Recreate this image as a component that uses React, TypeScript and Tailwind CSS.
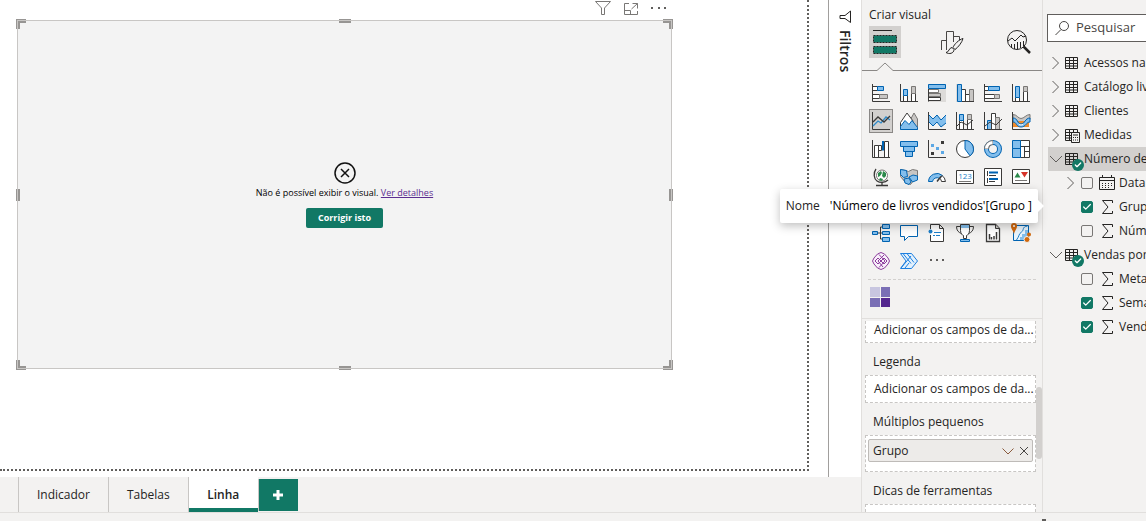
import { useState, type ReactNode } from "react";
import { Check } from "lucide-react";
import clsx from "clsx";

const DARK = "#3b3a39";
const BLUE = "#0063b1";
const SKY = "#83beec";
const GRAY = "#797775";
const SILVER = "#c8c6c4";

const axis = <path d="M.5 0v17.5H18" stroke={DARK} />;

const visuals: { name: string; art: ReactNode }[] = [
  {
    name: "Barras empilhadas",
    art: (
      <>
        <path d="M.5 2.5h5v4h-5M.5 10.5h7v4h-7" fill="#fff" stroke={DARK} />
        <path d="M5.5 2.5h6v4h-6z" fill={SKY} stroke={BLUE} />
        <path d="M7.5 10.5h8v4h-8z" fill={SILVER} stroke={GRAY} />
        {axis}
      </>
    ),
  },
  {
    name: "Colunas empilhadas",
    art: (
      <>
        <path d="M3.5 11.5h4v6h-4zM11.5 9.5h4v8h-4z" fill="#fff" stroke={DARK} />
        <path d="M3.5 5.5h4v6h-4z" fill={SKY} stroke={BLUE} />
        <path d="M11.5 2.5h4v7h-4z" fill={SILVER} stroke={GRAY} />
        {axis}
      </>
    ),
  },
  {
    name: "Barras agrupadas",
    art: (
      <>
        <path d="M0 0h18v18H0z" fill="#dddbd9" />
        <path d="M.5 5.5h10v3H.5z" fill="#fff" stroke={GRAY} />
        <path d="M.5 9.5h12v3H.5z" fill={SILVER} stroke={GRAY} />
        <path d="M.5 13.5h12v3H.5z" fill="#fff" stroke={DARK} />
        <path d="M.5.5h17v4H.5z" fill={SKY} stroke={BLUE} />
        <path d="M.5 5v12.5" stroke={DARK} />
      </>
    ),
  },
  {
    name: "Colunas agrupadas",
    art: (
      <>
        <path d="M0 0h5v18H0z" fill="#dddbd9" />
        <path d="M5.5 5.5h4v12h-4zM9.5 10.5h4v7h-4z" fill="#fff" stroke={DARK} />
        <path d="M13.5 5.5h4v12h-4z" fill={SILVER} stroke={GRAY} />
        <path d="M1.5.5h4v17h-4z" fill={SKY} stroke={BLUE} />
        <path d="M6 17.5h12" stroke={DARK} />
      </>
    ),
  },
  {
    name: "Barras 100% empilhadas",
    art: (
      <>
        <path d="M.5 2.5h4v4h-4M.5 10.5h10v4H.5" fill="#fff" stroke={DARK} />
        <path d="M4.5 2.5h11v4h-11z" fill={SKY} stroke={BLUE} />
        <path d="M10.5 10.5h5v4h-5z" fill={SILVER} stroke={GRAY} />
        {axis}
      </>
    ),
  },
  {
    name: "Colunas 100% empilhadas",
    art: (
      <>
        <path d="M3.5 13.5h4v4h-4zM11.5 7.5h4v10h-4z" fill="#fff" stroke={DARK} />
        <path d="M3.5 2.5h4v11h-4z" fill={SKY} stroke={BLUE} />
        <path d="M11.5 2.5h4v5h-4z" fill={SILVER} stroke={GRAY} />
        {axis}
      </>
    ),
  },
  {
    name: "Linhas",
    art: (
      <>
        {axis}
        <path d="M1 14l5-5 3 2 5-6 4 3" stroke="#2f8bc9" strokeWidth="1.3" />
        <path d="M1 10l5-5 6 5 6-6" stroke={DARK} strokeWidth="1.3" />
      </>
    ),
  },
  {
    name: "Área",
    art: (
      <>
        <path d="M8 12l6-11 3.5 6v10.5H8z" fill={SILVER} stroke={GRAY} />
        <path d="M.5 10.5L7 1l6 8-3 8H.5z" fill="#fff" stroke={DARK} />
        <path d="M.5 17.5v-3L5 8.5l4 4 3-4 5.5 7v2z" fill={SKY} stroke={BLUE} />
      </>
    ),
  },
  {
    name: "Faixas",
    art: (
      <>
        <path d="M1 3l4 4 4-4 4 5 5-5v8l-5 4-4-5-4 4-4-4z" fill={SKY} />
        <path d="M1 3l4 4 4-4 4 5 5-5M1 10l4 4 4-4 4 5 5-4" stroke={BLUE} />
        {axis}
      </>
    ),
  },
  {
    name: "Linha e colunas empilhadas",
    art: (
      <>
        <path d="M3.5 8.5h4v9h-4zM11.5 7.5h4v10h-4z" fill="#fff" stroke={DARK} />
        <path d="M3.5 2.5h4v6h-4z" fill={SKY} stroke={BLUE} />
        <path d="M11.5 2.5h4v5h-4z" fill={SILVER} stroke={GRAY} />
        <path d="M1 14l4-4 6 3 6-5" stroke={DARK} />
        {axis}
      </>
    ),
  },
  {
    name: "Linha e colunas agrupadas",
    art: (
      <>
        <path d="M3.5 8.5h4v9h-4z" fill={SKY} stroke={BLUE} />
        <path d="M7.5 1.5h4v16h-4z" fill="#fff" stroke={DARK} />
        <path d="M11.5 5.5h4v12h-4z" fill={SILVER} stroke={GRAY} />
        <path d="M1 14l5-4 6 3 6-6" stroke={DARK} />
        {axis}
      </>
    ),
  },
  {
    name: "Faixas de opções",
    art: (
      <>
        <path d="M1 2.5c4 0 5 4 8 4s5-4 9-4v5c-4 0-5 3-9 3s-4-3-8-3z" fill={SILVER} stroke={GRAY} />
        <path d="M1 9h16v6H1z" fill="#ee8b2d" />
        <path d="M1 6c5 0 4 6 8 6s4-6 9-6v4c-4 0-4 5-9 5s-4-5-8-5z" fill={SKY} stroke={BLUE} />
        <path d="M7 12.500q2 1 4 0" stroke="#fff" />
        {axis}
      </>
    ),
  },
  {
    name: "Cascata",
    art: (
      <>
        <path d="M2.5 5.5h4v12h-4zM6.500 5.500h3v5h-3zM12.500 1.500h4v16h-4z" fill="#fff" stroke={DARK} />
        <path d="M11 1v9.500" stroke={BLUE} strokeWidth="2" />
        {axis}
      </>
    ),
  },
  {
    name: "Funil",
    art: (
      <path d="M.5 1.5h17v5H.5zM3.5 6.5h11v5h-11zM5.5 11.5h7v5h-7z" fill={SKY} stroke={BLUE} />
    ),
  },
  {
    name: "Dispersão",
    art: (
      <>
        <path d="M13 1h3v3h-3zM3 12h3v3H3z" fill={DARK} />
        <path d="M3 4h3v3H3zM8 7h3v3H8zM13 11h3v3h-3z" fill="#5ca8e5" />
        {axis}
      </>
    ),
  },
  {
    name: "Pizza",
    art: (
      <>
        <circle cx="9" cy="9" r="8.5" fill="#fff" stroke={DARK} />
        <path d="M9 .5a8.500 8.500 0 0 1 5 15.300L9 9z" fill={SKY} stroke={BLUE} />
      </>
    ),
  },
  {
    name: "Rosca",
    art: (
      <>
        <circle cx="9" cy="9" r="6.500" stroke={BLUE} strokeWidth="5" />
        <circle cx="9" cy="9" r="6.500" stroke={SKY} strokeWidth="3" />
        <path d="M2.500 9A6.500 6.500 0 0 1 9 2.500" stroke={GRAY} strokeWidth="5" />
        <path d="M2.500 8.500A6.500 6.500 0 0 1 8.500 2.500" stroke="#fff" strokeWidth="3" />
      </>
    ),
  },
  {
    name: "Treemap",
    art: (
      <>
        <path d="M8.5.5h9v17h-9z" fill="#fff" stroke={DARK} />
        <path d="M8.5 6.5h9M12.5 6.5v11M12.5 11.5h5" stroke={DARK} />
        <path d="M.5.5h8v8h-8zM.5 8.5h8v9h-8z" fill={SKY} stroke={BLUE} />
      </>
    ),
  },
  {
    name: "Mapa",
    art: (
      <>
        <circle cx="10" cy="7.500" r="5.500" fill="#fff" stroke={GRAY} />
        <path d="M6 5l3-2 1 2-2 3-2 1zM11 3l3 2v3l-2 2-2-2zM8 10l3 1-1 2-3-1z" fill="#2b8a4b" />
        <path d="M4 1C1 5 2 11 5 13s8 2 11-1M10 14v3M4 17.500h12" stroke={DARK} strokeWidth="1.300" />
      </>
    ),
  },
  {
    name: "Mapa coroplético",
    art: (
      <>
        <path d="M.5 1.500l5 1 3 1 4-2 5 1v7l-4 3-3 4-5-2-5-6z" fill={SILVER} stroke={GRAY} />
        <path
          d="M.5 1.500l6 1 1 6-4 1-3-3zM9 9l4-2 4.500 1v4l-5 2zM4 11l5-1 2 4-2 2.500-4-1.500z"
          fill={SKY}
          stroke={BLUE}
        />
      </>
    ),
  },
  {
    name: "Medidor",
    art: (
      <>
        <path d="M.5 13.500a8.500 8.500 0 0 1 14-6l-3 3a4.500 4.500 0 0 0-7 3z" fill={SKY} stroke={BLUE} />
        <path d="M14 7.500a8.500 8.500 0 0 1 3.500 6h-4a5 5 0 0 0-1.500-3z" fill="#fff" stroke={DARK} />
        <path d="M9 13.500l4-5" stroke={DARK} strokeWidth="1.500" />
      </>
    ),
  },
  {
    name: "Cartão",
    art: (
      <>
        <path d="M.5 2.5h17v13H.5z" fill="#fff" stroke={DARK} />
        <path d="M3 13.5h12" stroke={GRAY} />
        <text x="9" y="11" textAnchor="middle" fontSize="8" fill="#1d7fc9">
          123
        </text>
      </>
    ),
  },
  {
    name: "Cartão de várias linhas",
    art: (
      <>
        <path d="M.5.5h17v17H.5z" fill="#fff" stroke={DARK} />
        <path d="M3.5 3v5M3.5 10v5M5 13.5h6M5 7.5h7" stroke={DARK} />
        <path d="M5 4.5h9M5 11h9" stroke={BLUE} strokeWidth="2" />
      </>
    ),
  },
  {
    name: "KPI",
    art: (
      <>
        <path d="M.5 1.5h17v14H.5z" fill="#fff" stroke={DARK} />
        <path d="M2.500 9.500l3-5 3 5z" fill="#2b8a4b" />
        <path d="M9 4h7l-3.500 5.500z" fill="#d6332a" />
        <path d="M3 12.5h12" stroke={GRAY} />
      </>
    ),
  },
];

const moreVisuals: { name: string; art: ReactNode }[] = [
  {
    name: "Árvore hierárquica",
    art: (
      <>
        <path d="M6 9h5M8.5 3v12M8.5 3H11M8.5 15H11" stroke={DARK} />
        <path
          d="M.5 7.5h5v3h-5zM10.5.5h7v4h-7zM10.5 7.5h7v3h-7zM10.5 13.5h7v4h-7z"
          fill={SKY}
          stroke={BLUE}
        />
      </>
    ),
  },
  {
    name: "P e R",
    art: <path d="M.5 1.5h17v11h-9l-4 4v-4h-4z" fill="#fff" stroke={BLUE} />,
  },
  {
    name: "Narrativa",
    art: (
      <>
        <path d="M2.5 5V.5h9l4 4v13h-13V11M11.5.5v4h4" fill="#fff" stroke={DARK} />
        <circle cx="2.500" cy="7.500" r="2" fill="#1d7fc9" />
        <path d="M6 8.5h7M5 11.5h2M8 11.5h4" stroke="#1d7fc9" />
      </>
    ),
  },
  {
    name: "Metas",
    art: (
      <>
        <path d="M4 2.500H.5c0 4 2 6 5 7M14 2.500h3.500c0 4-2 6-5 7" stroke={DARK} />
        <path d="M4.500.5h9v6c0 3-2 5-3 5v3h-3v-3c-1 0-3-2-3-5z" fill="#fff" stroke={DARK} />
        <path d="M5 1h8v3H5z" fill={SKY} />
        <path d="M4.500 15.500h9v2h-9z" fill={SKY} stroke={BLUE} />
      </>
    ),
  },
  {
    name: "Relatório paginado",
    art: (
      <>
        <path d="M2.5.5h9l4 4v13h-13z" fill="#fff" stroke={DARK} strokeWidth="1.300" />
        <path d="M11.5.5v4h4" fill={SILVER} stroke={DARK} />
        <path d="M5.500 10v5.500M7.500 13v2.500M10 12v3.500M12.500 8v7.500" stroke={DARK} strokeWidth="1.500" />
      </>
    ),
  },
  {
    name: "Mapa ArcGIS",
    art: (
      <>
        <path d="M1.5 1.5h15v15h-15z" fill="#e9f4fc" stroke={BLUE} />
        <path d="M16 2v4h-3v4h-3v3H8v3h6v-4h2z" fill={SKY} />
        <path d="M15.500 2c-6 1-3 4-6 6s-2 4-5 8" stroke="#1d7fc9" />
        <path d="M-1 2q0-3 3-3t3 3c0 3-2 4-3 8-1-4-3-5-3-8z" fill="#d1680d" />
        <circle cx="2" cy="2" r="1" fill="#fff" />
        <circle cx="15" cy="15.500" r="3" fill="#d1680d" stroke="#f3f2f1" />
        <circle cx="17" cy="10.500" r="2" fill="#d1680d" />
      </>
    ),
  },
  {
    name: "Power Apps",
    art: (
      <>
        <path
          d="M9 .5l3.500 1.500L16 6l1.500 3L16 12l-3.500 4L9 17.500 5.500 16 2 12 .5 9 2 6l3.500-4z"
          fill="#f8f0fa"
          stroke="#8c3c9c"
        />
        <path
          d="M7 2.500L13 9l-6 6.500M12 3L9 6l-3 3 5 6M9 9l-3-3-3 3 3 3zM15 9l-3-3-3 3 3 3z"
          stroke="#8c3c9c"
        />
      </>
    ),
  },
  {
    name: "Power Automate",
    art: (
      <>
        <path d="M.5 1.5h11l6 7.500-6 7.500H.5L6 9z" fill="#e3f1fc" stroke="#1d7fe0" />
        <path d="M3 1.500l8 10M7 1.500l7 9M1 16l10-12M5 16l4-5" stroke="#1d7fe0" />
      </>
    ),
  },
  {
    name: "Obter mais visuais",
    art: <path d="M2 7h2v2H2zM8 7h2v2H8zM14 7h2v2h-2z" fill="#605e5c" />,
  },
];

const buildTabs = [
  {
    name: "Criar visual",
    art: (
      <>
        <path d="M4 4.5h19" stroke="#252423" />
        <path
          d="M4.5 9.5h23v7h-23zM4.5 20.5h23v7h-23z"
          fill="#117865"
          stroke="#252423"
          strokeDasharray="2 1"
        />
      </>
    ),
  },
  {
    name: "Formatar visual",
    art: (
      <>
        <path d="M5.5 24V14.5h5V24M10.5 16V5.5h7V16M17.5 10.5h6v4" stroke="#484644" />
        <path
          d="M27 12.500c-4 1-9 6-10 9l2 2c3-2 7-7 8-11zM16 21.500c-3 0-3 5-6 5 3 2 8 1 8-3z"
          fill="#f3f2f1"
          stroke="#252423"
        />
      </>
    ),
  },
  {
    name: "Análise",
    art: (
      <>
        <circle cx="14" cy="14" r="9.500" stroke="#252423" />
        <path
          d="M5 15l4-3 3 3 6-6 2 2 3-1M8.500 22v-4M11.500 23v-5M14.500 23v-7M17.500 22v-6M20.500 20v-5"
          stroke="#252423"
        />
        <path d="M20.500 20.500l6.500 6.500" stroke="#252423" strokeWidth="2.500" />
      </>
    ),
  },
];

type Field = { name: string; icon: "sigma" | "calendar"; checked: boolean };
type Table = { name: string; open?: boolean; selected?: boolean; measure?: boolean; fields?: Field[] };

const tables: Table[] = [
  { name: "Acessos na" },
  { name: "Catálogo livros" },
  { name: "Clientes" },
  { name: "Medidas", measure: true },
  {
    name: "Número de livros vendidos",
    open: true,
    selected: true,
    fields: [
      { name: "Data", icon: "calendar", checked: false },
      { name: "Grupo", icon: "sigma", checked: true },
      { name: "Número", icon: "sigma", checked: false },
    ],
  },
  {
    name: "Vendas por",
    open: true,
    fields: [
      { name: "Meta", icon: "sigma", checked: false },
      { name: "Semana", icon: "sigma", checked: true },
      { name: "Vendas", icon: "sigma", checked: true },
    ],
  },
];

function VisualButton({ name, art, selected }: { name: string; art: ReactNode; selected?: boolean }) {
  return (
    <button
      type="button"
      aria-label={name}
      className={clsx(
        "flex size-6 items-center justify-center",
        selected && "bg-[#d2d0ce] outline outline-1 -outline-offset-1 outline-[#8a8886]"
      )}
    >
      <svg viewBox="0 0 18 18" className="size-[18px] overflow-visible" fill="none">
        {art}
      </svg>
    </button>
  );
}

function Chevron({ open }: { open?: boolean }) {
  return (
    <svg viewBox="0 0 16 16" className="size-4 shrink-0" fill="none" stroke="#605e5c">
      <path d={open ? "M2 5l6 6 6-6" : "M4.500 2l6 6-6 6"} />
    </svg>
  );
}

function TableIcon({ measure }: { measure?: boolean }) {
  return (
    <svg viewBox="0 0 16 16" className="size-4 shrink-0 overflow-visible" fill="none" stroke="#252423">
      <path d="M1.5 2.5h12v11h-12zM1.5 5.5h12M1.5 8.5h12M1.5 11h12M5.5 2.5v11M9.5 2.5v11" />
      {measure && (
        <>
          <path d="M7.5 5.5h8v10h-8z" fill="#f3f2f1" />
          <path d="M9 8h5" />
          <path d="M9 10.5h5M9 13h5" strokeDasharray="1 1" />
        </>
      )}
    </svg>
  );
}

function FieldIcon({ icon }: { icon: Field["icon"] }) {
  return (
    <svg viewBox="0 0 16 16" className="size-4 shrink-0" fill="none" stroke="#252423">
      {icon === "sigma" ? (
        <path d="M13.5 4V1.5H3.5L9 8l-5.500 6.500h10V12" />
      ) : (
        <>
          <path d="M.5 2.5h15v12H.5zM.5 5.5h15M3.5 0v3M12.5 0v3" />
          <path d="M3 8.5h10M3 10.5h10M3 12.5h8" strokeDasharray="1 2" />
        </>
      )}
    </svg>
  );
}

function FieldRow({ field }: { field: Field }) {
  const [checked, setChecked] = useState(field.checked);

  return (
    <div className="flex h-6 items-center pl-[15px]">
      <span className="mr-0.5 w-4 shrink-0">{field.icon === "calendar" && <Chevron />}</span>
      <label className="flex items-center whitespace-nowrap">
        <span className="relative flex size-3 shrink-0">
          <input
            type="checkbox"
            checked={checked}
            onChange={(e) => setChecked(e.target.checked)}
            className="size-3 appearance-none rounded-[2px] border border-[#797775] checked:border-[#117865] checked:bg-[#117865]"
          />
          {checked && (
            <Check className="pointer-events-none absolute inset-0 size-3 p-px text-white" strokeWidth={3} />
          )}
        </span>
        <span className="mr-1 ml-1.5">
          <FieldIcon icon={field.icon} />
        </span>
        {field.name}
      </label>
    </div>
  );
}

function DataPane() {
  return (
    <aside className="w-[104px] shrink-0 overflow-hidden border-l border-[#e1dfdd] pt-3.5 text-[12px] text-[#252423]">
      <div className="ml-1 flex h-7 items-center border border-r-0 border-[#605e5c] bg-white pl-1.5">
        <svg viewBox="0 0 16 16" className="size-4 shrink-0" fill="none" stroke="#484644">
          <circle cx="10" cy="6" r="4.500" />
          <path d="M7 9.500L1.500 15" />
        </svg>
        <input
          type="text"
          aria-label="Pesquisar"
          placeholder="Pesquisar"
          className="ml-1.5 w-full min-w-0 bg-transparent text-[13px] outline-none placeholder:text-[#484644]"
        />
      </div>
      <div className="mt-[9px] ml-[5px]">
        {tables.map((t) => (
          <div key={t.name}>
            <button
              type="button"
              aria-expanded={!!t.open}
              className={clsx("flex h-6 w-full items-center whitespace-nowrap", t.selected && "bg-[#d2d0ce]")}
            >
              <Chevron open={t.open} />
              <span className="relative mr-1">
                <TableIcon measure={t.measure} />
                {t.open && (
                  <span className="absolute top-2 left-2 flex size-3 items-center justify-center rounded-full bg-[#117865]">
                    <Check className="size-2 text-white" strokeWidth={4} />
                  </span>
                )}
              </span>
              {t.name}
            </button>
            {t.fields?.map((f) => (
              <FieldRow key={f.name} field={f} />
            ))}
          </div>
        ))}
      </div>
    </aside>
  );
}

function WellLabel({ children }: { children: ReactNode }) {
  return <p className="flex h-8 items-center pt-1.5 pl-2">{children}</p>;
}

function BuildPane() {
  return (
    <aside className="relative flex w-[181px] shrink-0 flex-col border-l border-[#e1dfdd] text-[12px] text-[#252423]">
      <h2 className="px-[7px] pt-1.5 leading-[18px]">Criar visual</h2>
      <div className="mt-0.5 flex justify-between px-[7px]">
        {buildTabs.map((tab, i) => (
          <button key={tab.name} type="button" aria-label={tab.name} className={clsx("size-8", i === 0 && "bg-[#d2d0ce]")}>
            <svg viewBox="0 0 32 32" className="size-8" fill="none">
              {tab.art}
            </svg>
          </button>
        ))}
      </div>
      <div className="mt-1 flex h-[9px] shrink-0 items-end">
        <span className="w-[15px] border-b border-[#8a8886]" />
        <svg viewBox="0 0 16 9" className="h-[9px] w-4" fill="none" stroke="#8a8886">
          <path d="M0 8.500L8 1l8 7.500" />
        </svg>
        <span className="flex-1 border-b border-[#8a8886]" />
      </div>

      <div className="mt-2.5 grid grid-cols-[repeat(6,24px)] gap-1 px-[7px]">
        {visuals.map((v) => (
          <VisualButton key={v.name} {...v} selected={v.name === "Linhas"} />
        ))}
      </div>
      <div className="mt-8 grid grid-cols-[repeat(6,24px)] gap-1 px-[7px]">
        {moreVisuals.map((v) => (
          <VisualButton key={v.name} {...v} />
        ))}
      </div>
      <div className="mx-1.5 mt-1.5 border-t border-dashed border-[#d2d0ce]" />
      <div className="mt-[7px] mb-[11px] ml-2 grid size-5 shrink-0 grid-cols-2 gap-px">
        <span className="bg-[#c8c6e0]" />
        <span className="bg-[#7a6fb5]" />
        <span className="bg-[#7a6fb5]" />
        <span className="bg-[#54278f]" />
      </div>

      <div className="min-h-0 flex-1 overflow-hidden border-t border-[#e1dfdd] pt-0.5 pr-1.5 pl-[3px]">
        <div className="flex h-[22px] items-center border border-t-0 border-dashed border-[#c8c6c4] bg-white pb-1 pl-2 whitespace-nowrap">
          Adicionar os campos de da...
        </div>
        <WellLabel>Legenda</WellLabel>
        <div className="flex h-7 items-center border border-dashed border-[#c8c6c4] bg-white pl-2 whitespace-nowrap">
          Adicionar os campos de da...
        </div>
        <WellLabel>Múltiplos pequenos</WellLabel>
        <div className="h-[37px] border border-dashed border-[#c8c6c4] bg-white px-0.5 pt-[3px]">
          <div className="flex h-[23px] items-center gap-1 rounded-[2px] border border-[#bebbb8] bg-[#edebe9] pr-0.5 pl-1">
            <span className="flex-1">Grupo</span>
            <button type="button" aria-label="Opções de Grupo">
              <svg viewBox="0 0 12 12" className="size-3" fill="none" stroke="#8a5a3c">
                <path d="M.5 3.500L6 9l5.500-5.500" />
              </svg>
            </button>
            <button type="button" aria-label="Remover Grupo">
              <svg viewBox="0 0 12 12" className="size-3" fill="none" stroke="#484644">
                <path d="M2 2l8 8M10 2l-8 8" />
              </svg>
            </button>
          </div>
        </div>
        <WellLabel>Dicas de ferramentas</WellLabel>
        <div className="h-7 border border-dashed border-[#c8c6c4] bg-white" />
      </div>
      <div className="absolute right-0 bottom-[53px] h-[72px] w-1.5 rounded-full bg-[#d2d0ce]" />
    </aside>
  );
}

function Handles() {
  return (
    <>
      <span className="absolute -top-0.5 -left-0.5 size-2.5 border-t-4 border-l-4 border-[#979593]" />
      <span className="absolute -top-0.5 -right-0.5 size-2.5 border-t-4 border-r-4 border-[#979593]" />
      <span className="absolute -bottom-0.5 -left-0.5 size-2.5 border-b-4 border-l-4 border-[#979593]" />
      <span className="absolute -right-0.5 -bottom-0.5 size-2.5 border-r-4 border-b-4 border-[#979593]" />
      <span className="absolute -top-0.5 left-1/2 h-1 w-3 -translate-x-1/2 bg-[#979593]" />
      <span className="absolute -bottom-0.5 left-1/2 h-1 w-3 -translate-x-1/2 bg-[#979593]" />
      <span className="absolute top-1/2 -left-0.5 h-3 w-1 -translate-y-1/2 bg-[#979593]" />
      <span className="absolute top-1/2 -right-0.5 h-3 w-1 -translate-y-1/2 bg-[#979593]" />
      {/* the frame line runs on top of the handles */}
      <span className="pointer-events-none absolute -inset-px border border-[#c8c6c4]" />
    </>
  );
}

function Canvas() {
  return (
    <main className="flex min-w-0 flex-1 pr-[19px] pb-1.5">
      <div className="flex flex-1 flex-col border-r-2 border-b-2 border-dotted border-[#605e5c] pr-[135px] pb-[100px] pl-[17px]">
        <div className="flex h-5 shrink-0 items-start justify-end gap-3 pr-[5px]">
          <button type="button" aria-label="Filtros no visual">
            <svg viewBox="0 0 16 16" className="size-4" fill="none" stroke="#797775">
              <path d="M.5 1.500h15L9.500 8v6.500h-3V8z" />
            </svg>
          </button>
          <button type="button" aria-label="Modo de foco">
            <svg viewBox="0 0 16 16" className="size-4" fill="none" stroke="#797775">
              <path d="M6 3.500H1.500v11h13V11M1.500 10.500h6v4M9.500 3.500h5v5M14.500 3.500L8.500 9" />
            </svg>
          </button>
          <button type="button" aria-label="Mais opções">
            <svg viewBox="0 0 16 16" className="size-4" fill="#605e5c">
              <path d="M0 7h2v2H0zM7 7h2v2H7zM13 7h2v2h-2z" />
            </svg>
          </button>
        </div>
        <section className="relative flex flex-1 flex-col items-center justify-center border border-[#c8c6c4] bg-[#f3f3f3] text-[9px] text-black">
          <svg viewBox="0 0 22 22" className="size-[22px]" fill="none" stroke="#111" strokeWidth="1.500">
            <circle cx="11" cy="11" r="10" />
            <path d="M7 7l8 8M15 7l-8 8" />
          </svg>
          <p className="mt-0.5 leading-[14px] whitespace-nowrap">
            Não é possível exibir o visual.{" "}
            <a href="#detalhes" className="text-[#5c2e91] underline">
              Ver detalhes
            </a>
          </p>
          <button type="button" className="mt-2 h-5 rounded-[2px] bg-[#117865] px-3 font-bold text-white">
            Corrigir isto
          </button>
          <Handles />
        </section>
      </div>
    </main>
  );
}

function PageTabs() {
  const [active, setActive] = useState("Linha");

  return (
    <nav className="flex h-[35px] shrink-0 bg-[#f3f2f1] pl-[18px] text-[12px] text-[#252423]">
      {["Indicador", "Tabelas", "Linha"].map((page) => (
        <button
          key={page}
          type="button"
          onClick={() => setActive(page)}
          className={clsx(
            "min-w-[70px] border-l border-[#c8c6c4] px-[18px]",
            active === page && "bg-white font-semibold shadow-[inset_0_-4px_#117865]"
          )}
        >
          {page}
        </button>
      ))}
      <button
        type="button"
        aria-label="Nova página"
        className="mt-0.5 mb-px flex w-10 items-center justify-center border-l border-[#c8c6c4] bg-[#117865]"
      >
        <svg viewBox="0 0 12 12" className="size-3" fill="#fff">
          <path d="M4.500 1h3v3.500H11v3H7.500V11h-3V7.500H1v-3h3.500z" />
        </svg>
      </button>
    </nav>
  );
}

export default function App() {
  return (
    <div className="relative flex h-screen flex-col overflow-hidden bg-[#f3f2f1] font-['Open_Sans',sans-serif]">
      <div className="flex min-h-0 flex-1">
        <div className="flex min-w-0 flex-1 flex-col">
          <div className="flex min-h-0 flex-1 bg-white">
            <Canvas />
            <aside className="flex w-[33px] shrink-0 flex-col items-center border-l border-[#a19f9d] pt-2.5">
              <svg viewBox="0 0 14 14" className="size-3.5" fill="none" stroke="#252423">
                <path d="M12.500 1v11.500L7 8.500H2v-3h5z" />
              </svg>
              <h2 className="mt-1.5 text-[14px] leading-5 font-semibold text-[#252423] [writing-mode:vertical-rl]">
                Filtros
              </h2>
            </aside>
          </div>
          <PageTabs />
        </div>
        <BuildPane />
        <DataPane />
      </div>

      <footer className="flex h-[9px] shrink-0 items-end justify-end border-t border-[#e1dfdd]">
        <span className="mr-[100px] h-0.5 w-1 bg-[#605e5c]" />
      </footer>

      <div
        role="tooltip"
        className="absolute top-[189px] right-[108px] flex h-[34px] items-center gap-2.5 rounded-[2px] bg-white px-1.5 text-[12px] whitespace-nowrap text-[#252423] shadow-[0_3px_10px_rgba(0,0,0,0.25)]"
      >
        <span>Nome</span>
        <span className="text-black">'Número de livros vendidos'[Grupo ]</span>
        <svg viewBox="0 0 6 12" className="absolute top-[11px] -right-1.5 h-3 w-1.5" fill="#fff">
          <path d="M0 0l6 6-6 6z" />
        </svg>
      </div>
    </div>
  );
}
